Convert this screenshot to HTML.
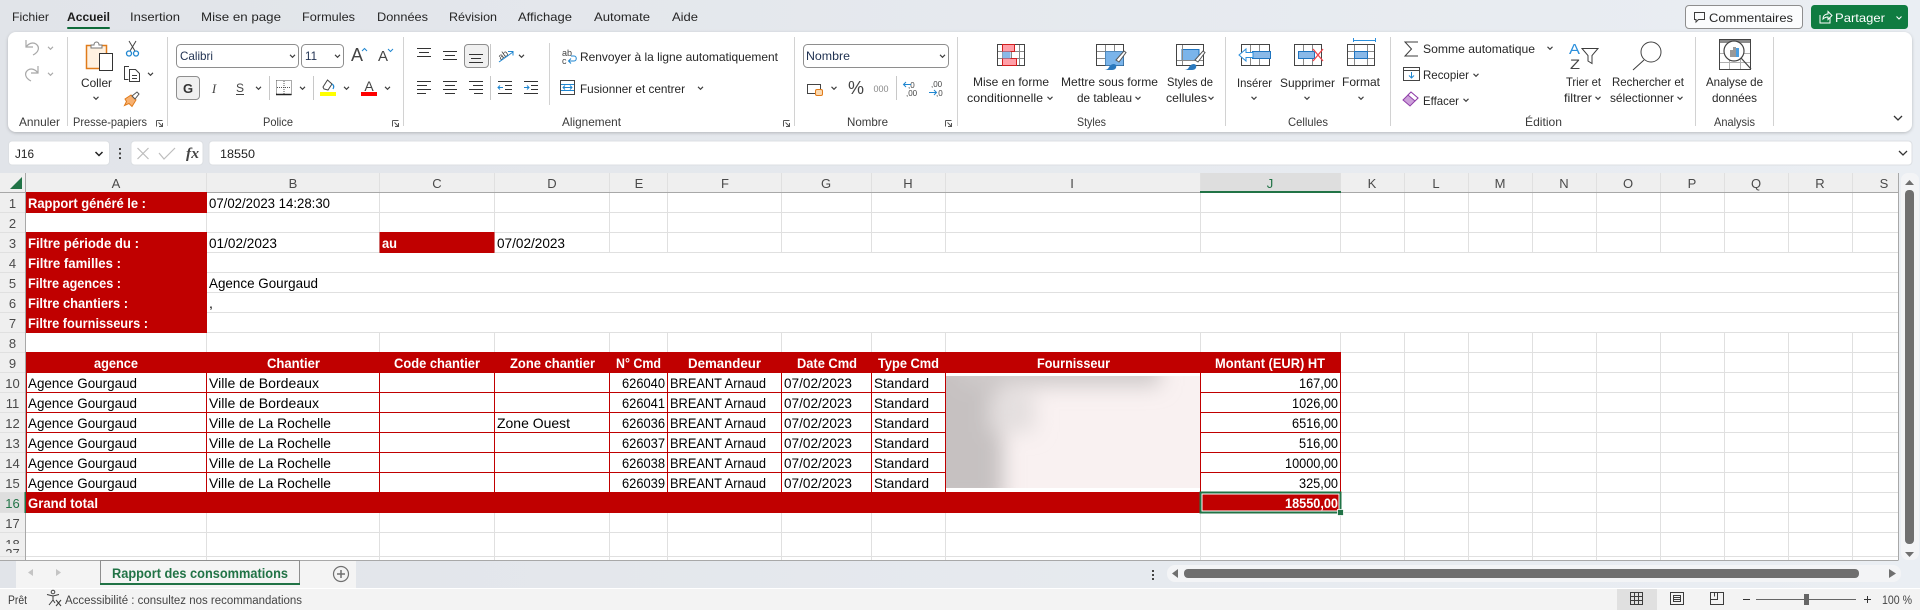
<!DOCTYPE html>
<html lang="fr"><head><meta charset="utf-8"><title>Rapport des consommations</title>
<style>
html,body{margin:0;padding:0;width:1920px;height:610px;overflow:hidden;background:#e5e8ed}
svg{display:block;font-family:"Liberation Sans",sans-serif}
.t{font-size:12px;fill:#262626}
.l{font-size:12px;fill:#3a3a3a}
.h{font-size:13px;fill:#4a4a4a;text-anchor:middle}
.c{font-size:14px;fill:#000}
.w{font-size:14px;fill:#fff;font-weight:bold}
.i{fill:none;stroke:#3c3c3c;stroke-width:1}
.g{stroke:#e0e0e0;stroke-width:1;fill:none}
.r{stroke:#c00000;stroke-width:1;fill:none}
.ch{fill:none;stroke:#3a3a3a;stroke-width:1.1}
</style></head><body>
<svg width="1920" height="610" viewBox="0 0 1920 610" xmlns="http://www.w3.org/2000/svg">
<defs>
<linearGradient id="bg" x1="0" x2="1" y1="0" y2="0"><stop offset="0" stop-color="#e1e4e9"/><stop offset="1" stop-color="#eaeef3"/></linearGradient>
<filter id="sh" x="-2%" y="-10%" width="104%" height="125%"><feDropShadow dx="0" dy="1" stdDeviation="1.5" flood-color="#000" flood-opacity=".22"/></filter>
<filter id="bl" x="-30%" y="-30%" width="160%" height="160%"><feGaussianBlur stdDeviation="10"/></filter>
<clipPath id="blc"><rect x="946" y="376" width="254" height="112"/></clipPath>
<clipPath id="r18a"><rect x="0" y="533" width="25" height="11"/></clipPath>
<clipPath id="r18b"><rect x="0" y="548" width="25" height="5"/></clipPath>
<path id="v" class="ch" d="M-2.500-1.200 0 1.300 2.500-1.200"/>
<path id="vg" fill="none" stroke="#a8a8a8" stroke-width="1.100" d="M-2.500-1.200 0 1.300 2.500-1.200"/>
</defs>

<rect width="1920" height="610" fill="url(#bg)"/>

<!-- tabs -->
<g class="t">
<text x="12" y="21" textLength="37" lengthAdjust="spacingAndGlyphs">Fichier</text>
<text x="67" y="21" textLength="43" lengthAdjust="spacingAndGlyphs" style="font-weight:bold" fill="#1c1c1c" stroke="none">Accueil</text>
<text x="130" y="21" textLength="50" lengthAdjust="spacingAndGlyphs">Insertion</text>
<text x="201" y="21" textLength="80" lengthAdjust="spacingAndGlyphs">Mise en page</text>
<text x="302" y="21" textLength="53" lengthAdjust="spacingAndGlyphs">Formules</text>
<text x="377" y="21" textLength="51" lengthAdjust="spacingAndGlyphs">Données</text>
<text x="449" y="21" textLength="48" lengthAdjust="spacingAndGlyphs">Révision</text>
<text x="518" y="21" textLength="54" lengthAdjust="spacingAndGlyphs">Affichage</text>
<text x="594" y="21" textLength="56" lengthAdjust="spacingAndGlyphs">Automate</text>
<text x="672" y="21" textLength="26" lengthAdjust="spacingAndGlyphs">Aide</text>
</g>
<rect x="67" y="27" width="43" height="2" rx="1" fill="#0e6b3a"/>

<!-- comments / share -->
<rect x="1685.5" y="5.5" width="117" height="23" rx="3.5" fill="#fbfcfd" stroke="#8e8e8e"/>
<path class="i" d="M1694.5 12.5h10v7h-6l-2.5 2.5v-2.5h-1.500z"/>
<text x="1709" y="22" class="t" textLength="84" lengthAdjust="spacingAndGlyphs">Commentaires</text>
<rect x="1811" y="5" width="97" height="24" rx="3.500" fill="#107c41"/>
<path fill="none" stroke="#fff" d="M1820 15v8h10v-6M1823 19c0-4 3-5 5-5v-2.500l4 4-4 4v-2.500c-2 0-4 1-5 2z"/>
<text x="1835" y="22" textLength="50" lengthAdjust="spacingAndGlyphs" style="font-size:12px" fill="#fff">Partager</text>
<path fill="none" stroke="#fff" stroke-width="1.100" d="M1896.500 16.500l2.500 2.500 2.500-2.500"/>

<!-- ribbon -->
<rect x="8" y="32" width="1904" height="100" rx="8" fill="#fff" filter="url(#sh)"/>
<g stroke="#d2d2d2" fill="none">
<path d="M67.500 37v89M167.500 37v89M403.500 37v89M794.500 37v89M957.500 37v89M1225.500 37v89M1390.500 37v89M1695.500 37v89M1773.500 37v89M549.500 43v62"/>
</g>
<g class="l">
<text x="19" y="126" textLength="41" lengthAdjust="spacingAndGlyphs">Annuler</text>
<text x="73" y="126" textLength="74" lengthAdjust="spacingAndGlyphs">Presse-papiers</text>
<text x="263" y="126" textLength="30" lengthAdjust="spacingAndGlyphs">Police</text>
<text x="562" y="126" textLength="59" lengthAdjust="spacingAndGlyphs">Alignement</text>
<text x="847" y="126" textLength="41" lengthAdjust="spacingAndGlyphs">Nombre</text>
<text x="1077" y="126" textLength="29" lengthAdjust="spacingAndGlyphs">Styles</text>
<text x="1288" y="126" textLength="40" lengthAdjust="spacingAndGlyphs">Cellules</text>
<text x="1525" y="126" textLength="37" lengthAdjust="spacingAndGlyphs">Édition</text>
<text x="1714" y="126" textLength="41" lengthAdjust="spacingAndGlyphs">Analysis</text>
</g>
<!-- dialog launchers -->
<g fill="none" stroke="#555">
<path d="M156.500 120.500h6M156.500 120.500v6M158.500 122.500l4 4M162.500 123v3.500h-3.500"/>
<path d="M392.500 120.500h6M392.500 120.500v6M394.500 122.500l4 4M398.500 123v3.500h-3.500"/>
<path d="M783.500 120.500h6M783.500 120.500v6M785.500 122.500l4 4M789.500 123v3.500h-3.500"/>
<path d="M945.500 120.500h6M945.500 120.500v6M947.500 122.500l4 4M951.500 123v3.500h-3.500"/>
</g>

<!-- undo / redo -->
<path fill="none" stroke="#a8a8a8" stroke-width="1.200" d="M26 40v7h7M26 47c3-4 7-5 10-3 4 3 3 8-3 11"/>
<path fill="none" stroke="#a8a8a8" stroke-width="1.200" d="M38 66v7h-7M38 73c-3-4-7-5-10-3-4 3-3 8 3 11"/>
<use href="#vg" x="50.500" y="48"/><use href="#vg" x="50.500" y="74"/>

<!-- paste -->
<rect x="86.500" y="45.500" width="20" height="23" fill="#fff1e0" stroke="#e07b1a" stroke-width="1.500"/>
<path fill="#fff" stroke="#777" d="M91 48v-3h3c0-4 5-4 5 0h3v3z"/>
<rect x="99.500" y="53.500" width="13" height="17" fill="#fff" stroke="#333"/>
<text x="81" y="87" class="t" textLength="31" lengthAdjust="spacingAndGlyphs">Coller</text>
<use href="#v" x="96" y="98"/>
<!-- scissors -->
<path fill="none" stroke="#444" d="M129 41l6 10M136 41l-6 10"/>
<circle cx="129" cy="53.500" r="2.500" fill="none" stroke="#1f86d0" stroke-width="1.300"/><circle cx="136" cy="53.500" r="2.500" fill="none" stroke="#1f86d0" stroke-width="1.300"/>
<!-- copy -->
<path class="i" d="M129 66.500h-4.500v13h4M129.500 69.500h6l4 4v8h-10z"/><path class="i" d="M132 75.500h5M132 78.500h5"/>
<use href="#v" x="150.500" y="74"/>
<!-- painter -->
<path fill="#f7b070" stroke="#e07b1a" d="M125 99l6-4 5 5-4 6.500-3-3-4.500 2 2-4z"/>
<path fill="#fff" stroke="#555" d="M132 96l5-4 2 2-4 5z"/>

<!-- font -->
<rect x="176.500" y="44.500" width="122" height="23" rx="4" fill="#fff" stroke="#8e8e8e"/>
<text x="180" y="60" textLength="33" lengthAdjust="spacingAndGlyphs" style="font-size:12px" fill="#1e3050">Calibri</text>
<use href="#v" x="292.500" y="56"/>
<rect x="301.500" y="44.500" width="42" height="23" rx="4" fill="#fff" stroke="#8e8e8e"/>
<text x="305" y="60" textLength="12" lengthAdjust="spacingAndGlyphs" style="font-size:12px" fill="#1e3050">11</text>
<use href="#v" x="337.500" y="56"/>
<text x="351" y="61" style="font-size:18px" fill="#444" textLength="12" lengthAdjust="spacingAndGlyphs">A</text>
<path fill="none" stroke="#1f86d0" d="M362 51l2.500-2.500 2.500 2.500"/>
<text x="378" y="61" style="font-size:15px" fill="#444" textLength="10" lengthAdjust="spacingAndGlyphs">A</text>
<path fill="none" stroke="#1f86d0" d="M388 49l2.500 2.500 2.500-2.500"/>
<rect x="176.500" y="76.500" width="23" height="23" rx="3.500" fill="#f0f0f0" stroke="#8e8e8e"/>
<text x="188" y="93" text-anchor="middle" style="font-size:13px;font-weight:bold" fill="#333">G</text>
<text x="214" y="93" text-anchor="middle" style="font-size:13px;font-style:italic;font-family:'Liberation Serif',serif" fill="#444">I</text>
<text x="240" y="92" text-anchor="middle" style="font-size:12px" fill="#444">S</text><path stroke="#444" d="M236 94.500h8"/>
<use href="#v" x="258.500" y="88"/>
<path stroke="#c8c8c8" d="M269.500 76v24M313.500 76v24"/>
<path fill="none" stroke="#555" stroke-dasharray="1 1" d="M276.500 80.500h15v14M276.500 80.500v14M284 81v13M277 87.500h14"/>
<path stroke="#222" stroke-width="1.500" d="M276 94.500h15.500"/>
<use href="#v" x="302.500" y="88"/>
<path fill="#fff" stroke="#444" d="M323 87l4.500-7 4.500 4-4 6-4-1z"/>
<path fill="none" stroke="#1f86d0" stroke-width="1.200" d="M332 84c2 1 2 3 1 5"/>
<rect x="320" y="92" width="16" height="4" fill="#ffff00"/>
<use href="#v" x="346.500" y="88"/>
<text x="369" y="91" text-anchor="middle" style="font-size:14px" fill="#444">A</text>
<rect x="361" y="92" width="16" height="4" fill="#ff0000"/>
<use href="#v" x="387.500" y="88"/>

<!-- alignment -->
<g stroke="#333" fill="none">
<path d="M417 48.500h14M419 52.500h10M417 56.500h14"/>
<path d="M443 51.500h14M445 55.500h10M443 59.500h14"/>
<rect x="464.500" y="44.500" width="24" height="23" rx="3.500" fill="#f0f0f0" stroke="#8e8e8e"/>
<path d="M469 54.500h14M471 58.500h10M469 62.500h14"/>
<path d="M417 81.500h14M417 85.500h10M417 89.500h14M417 93.500h9"/>
<path d="M443 81.500h14M445 85.500h10M443 89.500h14M445 93.500h10"/>
<path d="M469 81.500h14M473 85.500h10M469 89.500h14M474 93.500h9"/>
<path d="M498 81.500h14M505 85.500h7M505 89.500h7M498 93.500h14"/>
<path d="M524 81.500h14M531 85.500h7M531 89.500h7M524 93.500h14"/>
</g>
<path stroke="#c8c8c8" d="M490.500 44v24M490.500 76v24"/>
<path fill="none" stroke="#1f86d0" d="M503 87.500h-5M500 85.500l-2 2 2 2M524 87.500h5M527 85.500l2 2-2 2"/>
<text x="498" y="58" transform="rotate(-35 503 55)" style="font-size:9px" fill="#444">ab</text>
<path fill="none" stroke="#1f86d0" d="M499 62l14-10M508 51.500h5v4"/>
<use href="#v" x="521.500" y="56"/>
<text x="562" y="56" style="font-size:9px" fill="#444">ab</text><text x="562" y="64" style="font-size:9px" fill="#444">c</text>
<path fill="none" stroke="#1f86d0" d="M569 61h5c3 0 3-5 0-5h-3M571 58.500l-2.500 2.500 2.500 2.500"/>
<text x="580" y="61" class="t" textLength="198" lengthAdjust="spacingAndGlyphs">Renvoyer à la ligne automatiquement</text>
<rect x="560.500" y="80.500" width="14" height="14" fill="#fff" stroke="#444"/>
<path fill="none" stroke="#1f86d0" d="M561 84.500h13M561 90.500h13M563 87.500h9M565 85.500l-2 2 2 2M570 85.500l2 2-2 2"/>
<text x="580" y="93" class="t" textLength="105" lengthAdjust="spacingAndGlyphs">Fusionner et centrer</text>
<use href="#v" x="700.500" y="88"/>

<!-- number -->
<rect x="803.500" y="44.500" width="145" height="23" rx="4" fill="#fff" stroke="#8e8e8e"/>
<text x="806" y="60" textLength="44" lengthAdjust="spacingAndGlyphs" style="font-size:12px" fill="#1e3050">Nombre</text>
<use href="#v" x="942.500" y="56"/>
<rect x="807.500" y="84.500" width="13" height="9" fill="#fff" stroke="#444"/>
<rect x="815.500" y="89.500" width="7" height="6" rx="1.500" fill="#fbd9b0" stroke="#e07b1a"/>
<use href="#v" x="834" y="88"/>
<text x="856" y="94" text-anchor="middle" style="font-size:18px" fill="#444">%</text>
<text x="881" y="92" text-anchor="middle" style="font-size:9px" fill="#888">000</text>
<path stroke="#c8c8c8" d="M896.500 76v24"/>
<text x="908" y="88" style="font-size:8px" fill="#444">,0</text><text x="906" y="96" style="font-size:8px" fill="#444">,00</text>
<path fill="none" stroke="#1f86d0" d="M904 84.500h7M906 82l-2.500 2.500 2.500 2.500"/>
<text x="931" y="87" style="font-size:8px" fill="#444">,00</text><text x="936" y="96" style="font-size:8px" fill="#444">,0</text>
<path fill="none" stroke="#1f86d0" d="M929 92.500h7M934 90l2.500 2.500-2.500 2.500"/>

<!-- styles -->
<g>
<rect x="997.500" y="44.500" width="27" height="21" fill="#fff" stroke="#444"/>
<path stroke="#888" d="M1002.500 45v20M1011.500 45v20M1019.500 45v20M998 51.500h26M998 58.500h26"/>
<rect x="1002.500" y="44.500" width="12" height="7" fill="#ff9fa8" stroke="#d21f1f"/>
<rect x="1002.500" y="58.500" width="14" height="7" fill="#ff9fa8" stroke="#d21f1f"/>
<rect x="1002.500" y="51.500" width="8" height="7" fill="#8ab9e8"/>
</g>
<g>
<rect x="1096.500" y="44.500" width="27" height="21" fill="#fff" stroke="#444"/>
<path stroke="#888" d="M1105.500 45v20M1114.500 45v20M1097 51.500h26M1097 58.500h26"/>
<rect x="1105.500" y="51.500" width="18" height="14" fill="#7ab4ea" stroke="#1f74bf" stroke-width=".5"/>
<path fill="#fff" stroke="#555" d="M1116 60l8-9 2 1.500-7 9.500z"/>
<path fill="#2a78bd" d="M1103 70c4 0 5-1 6-3 2-3 5-4 7-2 1 3-1 5-4 5z"/>
</g>
<g>
<rect x="1176.500" y="44.500" width="27" height="21" fill="#fff" stroke="#444"/>
<rect x="1182" y="49.500" width="17" height="11" fill="#7ab4ea" stroke="#1f74bf"/>
<path stroke="#888" d="M1182.500 45v20M1177 60.500h26"/>
<path fill="#fff" stroke="#555" d="M1195 60l8-9 2 1.500-7 9.500z"/>
<path fill="#2a78bd" d="M1183 70c4 0 5-1 6-3 2-3 5-4 7-2 1 3-1 5-4 5z"/>
</g>
<g class="t">
<text x="973" y="86" textLength="76" lengthAdjust="spacingAndGlyphs">Mise en forme</text>
<text x="967" y="102" textLength="76" lengthAdjust="spacingAndGlyphs">conditionnelle</text>
<text x="1061" y="86" textLength="97" lengthAdjust="spacingAndGlyphs">Mettre sous forme</text>
<text x="1077" y="102" textLength="55" lengthAdjust="spacingAndGlyphs">de tableau</text>
<text x="1167" y="86" textLength="46" lengthAdjust="spacingAndGlyphs">Styles de</text>
<text x="1166" y="102" textLength="41" lengthAdjust="spacingAndGlyphs">cellules</text>
<text x="1237" y="87" textLength="35" lengthAdjust="spacingAndGlyphs">Insérer</text>
<text x="1280" y="87" textLength="55" lengthAdjust="spacingAndGlyphs">Supprimer</text>
<text x="1342" y="86" textLength="38" lengthAdjust="spacingAndGlyphs">Format</text>
<text x="1566" y="86" textLength="35" lengthAdjust="spacingAndGlyphs">Trier et</text>
<text x="1564" y="102" textLength="28" lengthAdjust="spacingAndGlyphs">filtrer</text>
<text x="1612" y="86" textLength="72" lengthAdjust="spacingAndGlyphs">Rechercher et</text>
<text x="1610" y="102" textLength="64" lengthAdjust="spacingAndGlyphs">sélectionner</text>
<text x="1706" y="86" textLength="57" lengthAdjust="spacingAndGlyphs">Analyse de</text>
<text x="1712" y="102" textLength="45" lengthAdjust="spacingAndGlyphs">données</text>
<text x="1423" y="53" textLength="112" lengthAdjust="spacingAndGlyphs">Somme automatique</text>
<text x="1423" y="79" textLength="46" lengthAdjust="spacingAndGlyphs">Recopier</text>
<text x="1423" y="105" textLength="36" lengthAdjust="spacingAndGlyphs">Effacer</text>
</g>
<use href="#v" x="1050" y="98"/><use href="#v" x="1138" y="98"/><use href="#v" x="1211" y="98"/>
<use href="#v" x="1254" y="98"/><use href="#v" x="1307" y="98"/><use href="#v" x="1361" y="98"/>
<use href="#v" x="1550" y="48"/><use href="#v" x="1476" y="75"/><use href="#v" x="1466" y="100"/>
<use href="#v" x="1598" y="98"/><use href="#v" x="1680" y="98"/>

<!-- cells icons -->
<g>
<rect x="1241.500" y="44.500" width="28" height="21" fill="#fff" stroke="#444"/>
<path stroke="#888" d="M1250.500 45v20M1259.500 45v20"/>
<rect x="1252.500" y="51.500" width="18" height="7" fill="#8ab9e8" stroke="#1f74bf"/>
<path fill="#fff" stroke="#2b8fdc" d="M1239 55l7-6v3.500h7v5h-7v3.500z"/>
</g>
<g>
<rect x="1294.500" y="44.500" width="27" height="21" fill="#fff" stroke="#444"/>
<path stroke="#888" d="M1303.500 45v20M1312.500 45v20"/>
<rect x="1298.500" y="51.500" width="16" height="7" fill="#8ab9e8" stroke="#1f74bf"/>
<path stroke="#f0444c" stroke-width="1.300" d="M1313 49l10 12M1323 49l-10 12"/>
</g>
<g>
<rect x="1347.500" y="44.500" width="27" height="21" fill="#fff" stroke="#444"/>
<path stroke="#888" d="M1354.500 45v20M1367.500 45v20M1348 51.500h26M1348 58.500h26"/>
<rect x="1354.500" y="51.500" width="13" height="7" fill="#8ab9e8" stroke="#1f74bf"/>
<path stroke="#2b8fdc" fill="none" d="M1353.500 38v4M1375.500 38v4M1353 40.500h22"/>
</g>

<!-- edit icons -->
<path class="i" d="M1418 42h-13l6.500 7-6.500 7h13"/>
<rect x="1403.500" y="67.500" width="16" height="13" fill="#fff" stroke="#444"/>
<path stroke="#444" d="M1404 70.500h15"/>
<path fill="none" stroke="#1f86d0" d="M1411.500 72v6M1409 75.500l2.500 2.500 2.500-2.500"/>
<path fill="#cda0da" stroke="#8f3ea8" d="M1403 100l8-8 7 6-8 8z"/>
<path fill="#fff" stroke="#8f3ea8" d="M1408 95l3-3 7 6-3 3z"/>
<text x="1569" y="54" style="font-size:15px" fill="#2b8fdc" textLength="11" lengthAdjust="spacingAndGlyphs">A</text>
<text x="1570" y="69" style="font-size:14px" fill="#444" textLength="10" lengthAdjust="spacingAndGlyphs">Z</text>
<path class="i" d="M1582 48.500h16l-6 7v8l-4-2.500v-5.500z"/>
<circle cx="1651" cy="52" r="10" fill="#fff" stroke="#444"/><path class="i" d="M1644 60l-11 10"/>
<!-- analyse -->
<rect x="1719.500" y="39.500" width="31" height="30" fill="#fff" stroke="#444"/>
<rect x="1720" y="40" width="30" height="3" fill="#8c8c8c"/>
<path stroke="#b0b0b0" d="M1729.500 44v25M1740.500 44v25M1720 53.500h30M1720 62.500h30"/>
<circle cx="1734" cy="51" r="10" fill="#fff" stroke="#444" stroke-width="1.200"/>
<path stroke="#444" stroke-width="1.200" d="M1741 58l10 11"/>
<rect x="1730" y="50" width="3" height="7" fill="#999"/><rect x="1733" y="47" width="3" height="10" fill="#999"/><rect x="1736" y="48" width="3" height="9" fill="#4a9ee0"/>
<path fill="none" stroke="#333" stroke-width="1.300" d="M1894 116l4 4 4-4"/>

<!-- formula bar -->
<rect x="8.500" y="141" width="101" height="24" rx="3.500" fill="#fff" stroke="#dcdfe3"/>
<text x="15" y="158" textLength="19" lengthAdjust="spacingAndGlyphs" style="font-size:12px" fill="#222">J16</text>
<path fill="none" stroke="#222" stroke-width="1.500" d="M95.500 152l3.500 3.500 3.500-3.500"/>
<g fill="#444"><rect x="119" y="148" width="2" height="2"/><rect x="119" y="152.500" width="2" height="2"/><rect x="119" y="157" width="2" height="2"/></g>
<rect x="131" y="141" width="72" height="24" rx="3.500" fill="#fff" stroke="#dcdfe3"/>
<path fill="none" stroke="#bdbdbd" stroke-width="1.200" d="M137.500 148l11 11M148.500 148l-11 11M159 153l5 6 11-11"/>
<text x="186" y="158" style="font-size:15px;font-style:italic;font-weight:bold;font-family:'Liberation Serif',serif" fill="#444" textLength="13" lengthAdjust="spacingAndGlyphs">fx</text>
<rect x="209" y="141" width="1703" height="24" rx="3.500" fill="#fff" stroke="#dcdfe3"/>
<text x="220" y="158" textLength="35" lengthAdjust="spacingAndGlyphs" style="font-size:12px" fill="#222">18550</text>
<path fill="none" stroke="#333" stroke-width="1.300" d="M1899 151l4 4 4-4"/>

<!-- grid -->
<rect x="0" y="173" width="1898" height="387" fill="#fff"/>
<rect x="0" y="173" width="1898" height="19" fill="#efefef"/>
<rect x="0" y="192" width="25.500" height="368" fill="#efefef"/>
<rect x="1200" y="173" width="141" height="19" fill="#dedede"/>
<rect x="0" y="492" width="25.500" height="21" fill="#dedede"/>
<path fill="#217346" d="M22 177v12h-12z"/>
<!-- horizontal gridlines -->
<path class="g" d="M0 212.500H1898M0 232.500H1898M0 252.500H1898M0 272.500H1898M0 292.500H1898M0 312.500H1898M0 332.500H1898M0 352.500H1898M0 372.500H1898M0 392.500H1898M0 412.500H1898M0 432.500H1898M0 452.500H1898M0 472.500H1898M0 492.500H1898M0 512.500H1898M0 532.500H1898M0 556.500H1898"/>
<!-- vertical gridlines -->
<path class="g" d="M206.500 173V560M379.500 173V252M379.500 332V560M494.500 173V252M494.500 332V560M609.500 173V252M609.500 332V560M667.500 173V252M667.500 332V560M781.500 173V252M781.500 332V560M871.500 173V252M871.500 332V560M945.500 173V252M945.500 332V560M1200.500 173V252M1200.500 332V560M1340.500 173V252M1340.500 332V560"/>
<path class="g" d="M1404.500 173V252M1404.500 332V560M1468.500 173V252M1468.500 332V560M1532.500 173V252M1532.500 332V560M1596.500 173V252M1596.500 332V560M1660.500 173V252M1660.500 332V560M1724.500 173V252M1724.500 332V560M1788.500 173V252M1788.500 332V560M1852.500 173V252M1852.500 332V560"/>
<path fill="none" stroke="#a8a8a8" d="M0 192.500H1898M25.500 173V560M0 560.500H1898.500M1898.500 173V560"/>
<rect x="1200" y="191" width="141" height="2" fill="#217346"/>
<rect x="24.500" y="492" width="2" height="21" fill="#217346"/>

<!-- column letters -->
<g class="h">
<text x="116" y="188">A</text><text x="293" y="188">B</text><text x="437" y="188">C</text><text x="552" y="188">D</text><text x="639" y="188">E</text><text x="725" y="188">F</text><text x="826" y="188">G</text><text x="908" y="188">H</text><text x="1072" y="188">I</text><text x="1270" y="188" fill="#217346" style="fill:#217346">J</text><text x="1372" y="188">K</text><text x="1436" y="188">L</text><text x="1500" y="188">M</text><text x="1564" y="188">N</text><text x="1628" y="188">O</text><text x="1692" y="188">P</text><text x="1756" y="188">Q</text><text x="1820" y="188">R</text><text x="1884" y="188">S</text>
</g>
<!-- row numbers -->
<g class="h">
<text x="12.500" y="208">1</text><text x="12.500" y="228">2</text><text x="12.500" y="248">3</text><text x="12.500" y="268">4</text><text x="12.500" y="288">5</text><text x="12.500" y="308">6</text><text x="12.500" y="328">7</text><text x="12.500" y="348">8</text><text x="12.500" y="368">9</text><text x="12.500" y="388">10</text><text x="12.500" y="408">11</text><text x="12.500" y="428">12</text><text x="12.500" y="448">13</text><text x="12.500" y="468">14</text><text x="12.500" y="488">15</text><text x="12.500" y="508" style="fill:#217346">16</text><text x="12.500" y="528">17</text>
<text x="12.500" y="549" clip-path="url(#r18a)">18</text><text x="12.500" y="558" clip-path="url(#r18b)">27</text>
</g>

<!-- red blocks -->
<g fill="#c00000">
<rect x="26" y="192" width="181" height="21"/>
<rect x="26" y="232" width="181" height="101"/>
<rect x="379.500" y="232" width="115" height="21"/>
<rect x="26" y="352" width="1315" height="21"/>
<rect x="26" y="492" width="1315" height="21"/>
</g>
<!-- table lines -->
<rect x="26" y="373" width="1315" height="119" fill="#fff"/>
<path class="r" d="M26 392.500H1340M26 412.500H1340M26 432.500H1340M26 452.500H1340M26 472.500H1340"/>
<path class="r" d="M26.500 373V492M206.500 373V492M379.500 373V492M494.500 373V492M609.500 373V492M667.500 373V492M781.500 373V492M871.500 373V492M945.500 373V492M1200.500 373V492M1340.500 373V492"/>

<!-- blurred supplier -->
<rect x="946" y="373" width="254" height="119" fill="#fff"/>
<g clip-path="url(#blc)">
<rect x="946" y="376" width="254" height="112" fill="#f9f1f1"/>
<g filter="url(#bl)">
<rect x="925" y="360" width="78" height="145" fill="#c6c1c1"/>
<rect x="960" y="352" width="200" height="34" fill="#cfcaca"/>
<rect x="990" y="392" width="45" height="40" fill="#e4dfdf"/>
</g>
</g>

<!-- text cells -->
<g class="w">
<text x="28" y="208" textLength="118" lengthAdjust="spacingAndGlyphs">Rapport généré le :</text>
<text x="28" y="248" textLength="111" lengthAdjust="spacingAndGlyphs">Filtre période du :</text>
<text x="28" y="268" textLength="93" lengthAdjust="spacingAndGlyphs">Filtre familles :</text>
<text x="28" y="288" textLength="93" lengthAdjust="spacingAndGlyphs">Filtre agences :</text>
<text x="28" y="308" textLength="100" lengthAdjust="spacingAndGlyphs">Filtre chantiers :</text>
<text x="28" y="328" textLength="120" lengthAdjust="spacingAndGlyphs">Filtre fournisseurs :</text>
<text x="382" y="248" textLength="15" lengthAdjust="spacingAndGlyphs">au</text>
<text x="94" y="368" textLength="44" lengthAdjust="spacingAndGlyphs">agence</text>
<text x="267" y="368" textLength="53" lengthAdjust="spacingAndGlyphs">Chantier</text>
<text x="394" y="368" textLength="86" lengthAdjust="spacingAndGlyphs">Code chantier</text>
<text x="510" y="368" textLength="85" lengthAdjust="spacingAndGlyphs">Zone chantier</text>
<text x="616" y="368" textLength="45" lengthAdjust="spacingAndGlyphs">N° Cmd</text>
<text x="688" y="368" textLength="73" lengthAdjust="spacingAndGlyphs">Demandeur</text>
<text x="797" y="368" textLength="60" lengthAdjust="spacingAndGlyphs">Date Cmd</text>
<text x="878" y="368" textLength="61" lengthAdjust="spacingAndGlyphs">Type Cmd</text>
<text x="1037" y="368" textLength="73" lengthAdjust="spacingAndGlyphs">Fournisseur</text>
<text x="1215" y="368" textLength="110" lengthAdjust="spacingAndGlyphs">Montant (EUR) HT</text>
<text x="28" y="508" textLength="70" lengthAdjust="spacingAndGlyphs">Grand total</text>
<text x="1285" y="508" textLength="53" lengthAdjust="spacingAndGlyphs">18550,00</text>
</g>
<g class="c">
<text x="209" y="208" textLength="121" lengthAdjust="spacingAndGlyphs">07/02/2023 14:28:30</text>
<text x="209" y="248" textLength="68" lengthAdjust="spacingAndGlyphs">01/02/2023</text>
<text x="497" y="248" textLength="68" lengthAdjust="spacingAndGlyphs">07/02/2023</text>
<text x="209" y="288" textLength="109" lengthAdjust="spacingAndGlyphs">Agence Gourgaud</text>
<text x="209" y="308">,</text>
<text x="28" y="388" textLength="109" lengthAdjust="spacingAndGlyphs">Agence Gourgaud</text><text x="209" y="388" textLength="110" lengthAdjust="spacingAndGlyphs">Ville de Bordeaux</text><text x="622" y="388" textLength="43" lengthAdjust="spacingAndGlyphs">626040</text><text x="670" y="388" textLength="96" lengthAdjust="spacingAndGlyphs">BREANT Arnaud</text><text x="784" y="388" textLength="68" lengthAdjust="spacingAndGlyphs">07/02/2023</text><text x="874" y="388" textLength="55" lengthAdjust="spacingAndGlyphs">Standard</text><text x="1299" y="388" textLength="39" lengthAdjust="spacingAndGlyphs">167,00</text>
<text x="28" y="408" textLength="109" lengthAdjust="spacingAndGlyphs">Agence Gourgaud</text><text x="209" y="408" textLength="110" lengthAdjust="spacingAndGlyphs">Ville de Bordeaux</text><text x="622" y="408" textLength="43" lengthAdjust="spacingAndGlyphs">626041</text><text x="670" y="408" textLength="96" lengthAdjust="spacingAndGlyphs">BREANT Arnaud</text><text x="784" y="408" textLength="68" lengthAdjust="spacingAndGlyphs">07/02/2023</text><text x="874" y="408" textLength="55" lengthAdjust="spacingAndGlyphs">Standard</text><text x="1292" y="408" textLength="46" lengthAdjust="spacingAndGlyphs">1026,00</text>
<text x="28" y="428" textLength="109" lengthAdjust="spacingAndGlyphs">Agence Gourgaud</text><text x="209" y="428" textLength="122" lengthAdjust="spacingAndGlyphs">Ville de La Rochelle</text><text x="497" y="428" textLength="73" lengthAdjust="spacingAndGlyphs">Zone Ouest</text><text x="622" y="428" textLength="43" lengthAdjust="spacingAndGlyphs">626036</text><text x="670" y="428" textLength="96" lengthAdjust="spacingAndGlyphs">BREANT Arnaud</text><text x="784" y="428" textLength="68" lengthAdjust="spacingAndGlyphs">07/02/2023</text><text x="874" y="428" textLength="55" lengthAdjust="spacingAndGlyphs">Standard</text><text x="1292" y="428" textLength="46" lengthAdjust="spacingAndGlyphs">6516,00</text>
<text x="28" y="448" textLength="109" lengthAdjust="spacingAndGlyphs">Agence Gourgaud</text><text x="209" y="448" textLength="122" lengthAdjust="spacingAndGlyphs">Ville de La Rochelle</text><text x="622" y="448" textLength="43" lengthAdjust="spacingAndGlyphs">626037</text><text x="670" y="448" textLength="96" lengthAdjust="spacingAndGlyphs">BREANT Arnaud</text><text x="784" y="448" textLength="68" lengthAdjust="spacingAndGlyphs">07/02/2023</text><text x="874" y="448" textLength="55" lengthAdjust="spacingAndGlyphs">Standard</text><text x="1299" y="448" textLength="39" lengthAdjust="spacingAndGlyphs">516,00</text>
<text x="28" y="468" textLength="109" lengthAdjust="spacingAndGlyphs">Agence Gourgaud</text><text x="209" y="468" textLength="122" lengthAdjust="spacingAndGlyphs">Ville de La Rochelle</text><text x="622" y="468" textLength="43" lengthAdjust="spacingAndGlyphs">626038</text><text x="670" y="468" textLength="96" lengthAdjust="spacingAndGlyphs">BREANT Arnaud</text><text x="784" y="468" textLength="68" lengthAdjust="spacingAndGlyphs">07/02/2023</text><text x="874" y="468" textLength="55" lengthAdjust="spacingAndGlyphs">Standard</text><text x="1285" y="468" textLength="53" lengthAdjust="spacingAndGlyphs">10000,00</text>
<text x="28" y="488" textLength="109" lengthAdjust="spacingAndGlyphs">Agence Gourgaud</text><text x="209" y="488" textLength="122" lengthAdjust="spacingAndGlyphs">Ville de La Rochelle</text><text x="622" y="488" textLength="43" lengthAdjust="spacingAndGlyphs">626039</text><text x="670" y="488" textLength="96" lengthAdjust="spacingAndGlyphs">BREANT Arnaud</text><text x="784" y="488" textLength="68" lengthAdjust="spacingAndGlyphs">07/02/2023</text><text x="874" y="488" textLength="55" lengthAdjust="spacingAndGlyphs">Standard</text><text x="1299" y="488" textLength="39" lengthAdjust="spacingAndGlyphs">325,00</text>
</g>

<!-- selection -->
<rect x="1200.500" y="492.500" width="140" height="20" fill="none" stroke="#217346" stroke-width="2"/>
<rect x="1202" y="494" width="137" height="17" fill="none" stroke="#fff" stroke-width="1"/>
<rect x="1337.500" y="509.500" width="6" height="6" fill="#217346" stroke="#fff" stroke-width=".8"/>

<!-- vertical scrollbar -->
<rect x="1901" y="173" width="18" height="387" rx="7" fill="#f3f4f6"/>
<path fill="#6f6f6f" d="M1905 185l4.500-5 4.500 5z"/>
<rect x="1905" y="190" width="9" height="354" rx="4" fill="#6f6f6f"/>
<path fill="#6f6f6f" d="M1905 552h9l-4.500 5z"/>

<!-- sheet tabs -->
<rect x="16" y="561" width="340" height="27" fill="#f4f4f4"/>
<path fill="#c4c4c4" d="M33 569v7l-5-3.500zM56 569v7l5-3.500z"/>
<path fill="#f4f4f4" stroke="#8e8e8e" d="M100.500 585V560.500H299.500V585"/>
<rect x="100" y="583" width="200" height="2" fill="#217346"/>
<text x="112" y="578" textLength="176" lengthAdjust="spacingAndGlyphs" style="font-size:13.500px;font-weight:bold" fill="#217346">Rapport des consommations</text>
<circle cx="341" cy="574" r="7.500" fill="none" stroke="#707070" stroke-width="1.200"/>
<path stroke="#707070" stroke-width="1.500" d="M337 574h8M341 570v8"/>
<g fill="#444"><rect x="1152" y="570" width="2" height="2"/><rect x="1152" y="574" width="2" height="2"/><rect x="1152" y="578" width="2" height="2"/></g>
<rect x="1167" y="565" width="734" height="17" rx="8" fill="#f3f4f6"/>
<path fill="#6f6f6f" d="M1178 569v9l-6-4.500z"/>
<rect x="1184" y="569" width="675" height="9" rx="4" fill="#6f6f6f"/>
<path fill="#6f6f6f" d="M1889 569v9l7-4.500z"/>

<!-- status bar -->
<rect x="0" y="588" width="1920" height="22" fill="#f3f3f3"/>
<path stroke="#fff" d="M0 588.500H1920"/>
<text x="8" y="604" class="l" textLength="19" lengthAdjust="spacingAndGlyphs">Prêt</text>
<circle cx="53" cy="592" r="1.800" fill="none" stroke="#444"/>
<path class="i" d="M47 594.500l6 1.500 6-1.500M53 596v4M53 600l-4 5M53 600l2 3M56 600l5 6M61 600l-5 6"/>
<text x="65" y="604" textLength="237" lengthAdjust="spacingAndGlyphs" style="font-size:11.500px" fill="#444">Accessibilité : consultez nos recommandations</text>
<rect x="1617" y="589" width="40" height="21" fill="#e0e0e0"/>
<path class="i" d="M1630.500 592.500h12v12h-12zM1634.500 592.500v12M1638.500 592.500v12M1630.500 596.500h12M1630.500 600.500h12"/>
<path class="i" d="M1670.500 592.500h13v12h-13zM1673.500 595.500h7v6h-7zM1674 597.500h6M1674 599.500h6"/>
<path class="i" d="M1710.500 592.500h13v12h-13zM1710.500 599.500h7v-7"/><path class="i" d="M1714.500 592.500v4"/>
<path stroke="#333" d="M1743 599.500h7M1864 599.500h7M1867.500 596v7"/>
<path stroke="#666" d="M1756 599.500h100"/>
<rect x="1804" y="594" width="5" height="11" fill="#666"/>
<text x="1882" y="604" textLength="30" lengthAdjust="spacingAndGlyphs" style="font-size:11.500px" fill="#444">100 %</text>
</svg>
</body></html>
